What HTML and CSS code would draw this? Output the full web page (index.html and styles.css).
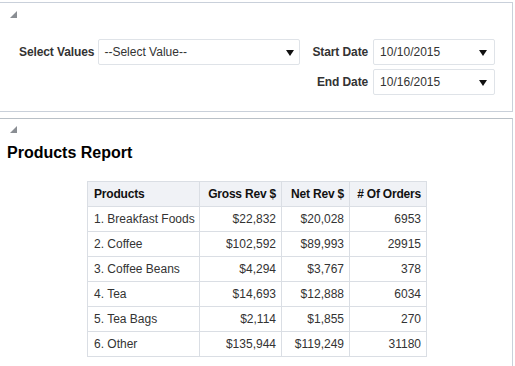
FILE: index.html
```html
<!DOCTYPE html>
<html>
<head>
<meta charset="utf-8">
<link rel="stylesheet" href="styles.css">
</head>
<body>
<section class="panel panel-filters">
  <span class="disclosure"></span>
  <div class="filters">
    <label class="lbl">Select Values</label>
    <div class="field field-select">
      <span class="val">--Select Value--</span>
      <svg class="arrow" width="8" height="6" viewBox="0 0 8 6"><path d="M0 0H8L4 6Z" fill="#111"/></svg>
    </div>
    <div class="dates">
      <label class="lbl">Start Date</label>
      <div class="field field-date">
        <span class="val">10/10/2015</span>
        <svg class="arrow" width="8" height="6" viewBox="0 0 8 6"><path d="M0 0H8L4 6Z" fill="#111"/></svg>
      </div>
      <label class="lbl">End Date</label>
      <div class="field field-date">
        <span class="val">10/16/2015</span>
        <svg class="arrow" width="8" height="6" viewBox="0 0 8 6"><path d="M0 0H8L4 6Z" fill="#111"/></svg>
      </div>
    </div>
  </div>
</section>
<section class="panel panel-report">
  <span class="disclosure"></span>
  <h1 class="title">Products Report</h1>
  <table class="report">
    <colgroup><col class="c1"><col class="c2"><col class="c3"><col class="c4"></colgroup>
    <thead>
      <tr><th>Products</th><th class="num">Gross Rev $</th><th class="num">Net Rev $</th><th class="num"># Of Orders</th></tr>
    </thead>
    <tbody>
      <tr><td>1. Breakfast Foods</td><td class="num">$22,832</td><td class="num">$20,028</td><td class="num">6953</td></tr>
      <tr><td>2. Coffee</td><td class="num">$102,592</td><td class="num">$89,993</td><td class="num">29915</td></tr>
      <tr><td>3. Coffee Beans</td><td class="num">$4,294</td><td class="num">$3,767</td><td class="num">378</td></tr>
      <tr><td>4. Tea</td><td class="num">$14,693</td><td class="num">$12,888</td><td class="num">6034</td></tr>
      <tr><td>5. Tea Bags</td><td class="num">$2,114</td><td class="num">$1,855</td><td class="num">270</td></tr>
      <tr><td>6. Other</td><td class="num">$135,944</td><td class="num">$119,249</td><td class="num">31180</td></tr>
    </tbody>
  </table>
</section>
</body>
</html>
```
FILE: styles.css
```css
html, body {
  margin: 0;
  padding: 0;
  background: #fff;
  font-family: "Liberation Sans", Arial, sans-serif;
  font-size: 12px;
  color: #333;
}
body {
  padding-top: 2px;
  width: 513px;
}
.panel {
  box-sizing: border-box;
  border-right: 1px solid #c9d0da;
}
.panel-filters {
  border-top: 1px solid #c9d0da;
  border-bottom: 1px solid #c9d0da;
  height: 110px;
  padding-top: 8px;
}
.panel-report {
  margin-top: 6px;
  border-top: 1px solid #b9c0c7;
  height: 248px;
  padding-top: 7px;
}
.disclosure {
  display: block;
  width: 0;
  height: 0;
  margin-left: 10px;
  border-left: 7px solid transparent;
  border-bottom: 7px solid #8a8e93;
}
.filters {
  display: flex;
  align-items: flex-start;
  margin-top: 21px;
  padding-left: 19px;
}
.lbl {
  font-weight: bold;
  color: #333;
  line-height: 26px;
  white-space: nowrap;
  letter-spacing: -0.1px;
}
.field {
  box-sizing: border-box;
  height: 26px;
  border: 1px solid #dfe3e8;
  border-radius: 2px;
  background: #fff;
  display: flex;
  align-items: center;
  justify-content: space-between;
  color: #333;
}
.field-select {
  width: 202px;
  margin-left: 4px;
  padding: 0 5px 0 5px;
}
.field-date {
  width: 122px;
  padding: 0 7px 0 6px;
}
.arrow {
  display: block;
  margin-top: 1px;
}
.dates {
  display: grid;
  grid-template-columns: auto 122px;
  column-gap: 5px;
  row-gap: 4px;
  margin-left: 12px;
  justify-items: end;
}
.title {
  margin: 11px 0 0 7px;
  font-size: 16px;
  line-height: 18px;
  font-weight: bold;
  color: #000;
}
.report {
  margin: 19px 0 0 87px;
  border-collapse: collapse;
  table-layout: fixed;
  width: 339px;
  font-size: 12px;
}
.report col.c1 { width: 112px; }
.report col.c2 { width: 82px; }
.report col.c3 { width: 68px; }
.report col.c4 { width: 77px; }
.report th, .report td {
  border: 1px solid #dadee4;
  padding: 0 5px 0 6px;
  white-space: nowrap;
  overflow: visible;
  color: #333;
}
.report th {
  background: #f0f2f6;
  font-weight: bold;
  color: #111;
  text-align: left;
  letter-spacing: -0.2px;
}
.report .num { text-align: right; }
.report tr { height: 25px; }
```
